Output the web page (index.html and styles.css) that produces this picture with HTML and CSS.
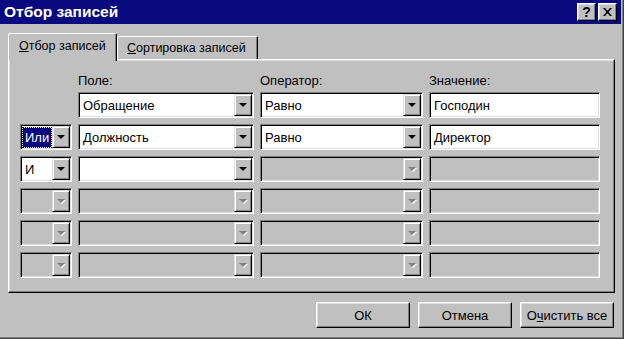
FILE: index.html
```html
<!DOCTYPE html>
<html lang="ru">
<head>
<meta charset="utf-8">
<title>Отбор записей</title>
<link rel="stylesheet" href="styles.css">
</head>
<body>
<div class="window">
  <div class="titlebar">
    <span class="title">Отбор записей</span>
    <div class="tb-buttons">
      <span class="tb-btn help">?</span>
      <span class="tb-btn close"><svg width="9" height="8" viewBox="0 0 9 8"><path d="M0 0h2l2.5 2.8L7 0h2L5.5 4L9 8H7L4.5 5.2L2 8H0l3.5-4z" fill="#000"/></svg></span>
    </div>
  </div>
  <div class="body">
    <div class="tabs">
      <div class="tab active"><span class="tab-label"><u>О</u>тбор записей</span></div>
      <div class="tab"><span class="tab-label"><u>С</u>ортировка записей</span></div>
    </div>
    <div class="panel">
      <div class="grid">
        <div></div>
        <div class="label">Поле:</div>
        <div class="label">Оператор:</div>
        <div class="label">Значение:</div>

        <div></div>
        <div class="combo"><span class="txt">Обращение</span><span class="dd"><i class="arrow"></i></span></div>
        <div class="combo"><span class="txt">Равно</span><span class="dd"><i class="arrow"></i></span></div>
        <div class="edit"><span class="txt">Господин</span></div>

        <div class="combo"><span class="txt"><span class="sel">Или</span></span><span class="dd"><i class="arrow"></i></span></div>
        <div class="combo"><span class="txt">Должность</span><span class="dd"><i class="arrow"></i></span></div>
        <div class="combo"><span class="txt">Равно</span><span class="dd"><i class="arrow"></i></span></div>
        <div class="edit"><span class="txt">Директор</span></div>

        <div class="combo"><span class="txt">И</span><span class="dd"><i class="arrow"></i></span></div>
        <div class="combo"><span class="txt"></span><span class="dd"><i class="arrow"></i></span></div>
        <div class="combo disabled"><span class="txt"></span><span class="dd"><i class="arrow"></i></span></div>
        <div class="edit disabled"><span class="txt"></span></div>

        <div class="combo disabled"><span class="txt"></span><span class="dd"><i class="arrow"></i></span></div>
        <div class="combo disabled"><span class="txt"></span><span class="dd"><i class="arrow"></i></span></div>
        <div class="combo disabled"><span class="txt"></span><span class="dd"><i class="arrow"></i></span></div>
        <div class="edit disabled"><span class="txt"></span></div>

        <div class="combo disabled"><span class="txt"></span><span class="dd"><i class="arrow"></i></span></div>
        <div class="combo disabled"><span class="txt"></span><span class="dd"><i class="arrow"></i></span></div>
        <div class="combo disabled"><span class="txt"></span><span class="dd"><i class="arrow"></i></span></div>
        <div class="edit disabled"><span class="txt"></span></div>

        <div class="combo disabled"><span class="txt"></span><span class="dd"><i class="arrow"></i></span></div>
        <div class="combo disabled"><span class="txt"></span><span class="dd"><i class="arrow"></i></span></div>
        <div class="combo disabled"><span class="txt"></span><span class="dd"><i class="arrow"></i></span></div>
        <div class="edit disabled"><span class="txt"></span></div>
      </div>
    </div>
    <div class="buttons">
      <span class="btn">ОК</span>
      <span class="btn">Отмена</span>
      <span class="btn"><span>О<u>ч</u>истить все</span></span>
    </div>
  </div>
</div>
</body>
</html>
```
FILE: styles.css
```css
* { box-sizing: border-box; }
html, body { margin: 0; padding: 0; }
body {
  background: #c0c0c0;
  font-family: "Liberation Sans", Arial, sans-serif;
  font-size: 13px;
  color: #000;
  width: 624px;
  height: 339px;
  overflow: hidden;
}
.window {
  width: 624px;
  height: 339px;
  background: #c0c0c0;
  border-right: 1px solid #404040;
  border-bottom: 1px solid #404040;
  padding: 0 2px 2px 0;
  box-shadow: inset -1px -1px #808080;
}
.titlebar {
  height: 24px;
  background: #0a0a80;
  display: flex;
  align-items: center;
  justify-content: space-between;
  padding: 0 4px 0 4px;
}
.title {
  color: #fff;
  font-weight: bold;
  font-size: 15.5px;
}
.tb-buttons { display: flex; gap: 2px; }
.tb-btn {
  width: 19px;
  height: 18px;
  background: #c0c0c0;
  border: 1px solid;
  border-color: #fff #000 #000 #fff;
  box-shadow: inset -1px -1px #808080, inset 1px 1px #dfdfdf;
  display: flex;
  align-items: center;
  justify-content: center;
  font-weight: bold;
  font-size: 14px;
  line-height: 1;
}
.body {
  padding: 9px 6px 0 8px;
}
.tabs {
  display: flex;
  align-items: flex-start;
  height: 26px;
  position: relative;
  z-index: 1;
}
.tab {
  height: 23px;
  margin-top: 3px;
  width: 141px;
  padding: 0 0 0 9px;
  display: flex;
  align-items: center;
  font-size: 12.5px;
  border: 1px solid;
  border-bottom: none;
  border-color: #fff #000 transparent #fff;
  box-shadow: inset -1px 0 #808080;
  border-radius: 2px 2px 0 0;
  background: #c0c0c0;
}
.tab-label { white-space: nowrap; }
.tab.active {
  height: 28px;
  margin-top: 0;
  width: 109px;
  padding: 0 0 4px 10px;
}
.panel {
  height: 234px;
  border: 1px solid;
  border-color: #fff #000 #000 #fff;
  box-shadow: inset -1px -1px #808080, inset 1px 1px #dfdfdf;
  padding: 12px 0 0 11px;
}
.grid {
  display: grid;
  grid-template-columns: 52px 176px 163px 171px;
  grid-template-rows: 14px repeat(6, 26px);
  column-gap: 6px;
  row-gap: 6px;
}
.label {
  line-height: 14px;
  position: relative;
  top: 2px;
}
.combo, .edit {
  display: flex;
  height: 26px;
  border: 1px solid;
  border-color: #808080 #fff #fff #808080;
  box-shadow: inset 1px 1px #000, inset -1px -1px #dfdfdf;
  background: #fff;
  padding: 1px;
}
.combo.disabled, .edit.disabled { background: #c0c0c0; }
.txt {
  flex: 1;
  display: flex;
  align-items: center;
  padding-left: 3px;
  white-space: nowrap;
  overflow: hidden;
}
.sel {
  background: #0a0a80;
  color: #fff;
  outline: 1px dotted #000;
  margin-left: -2px;
  padding: 2px;
  line-height: 15px;
}
.dd {
  width: 18px;
  height: 22px;
  background: #c0c0c0;
  border: 1px solid;
  border-color: #dfdfdf #000 #000 #dfdfdf;
  box-shadow: inset 1px 1px #fff, inset -1px -1px #808080;
  display: flex;
  align-items: center;
  justify-content: center;
}
.arrow {
  width: 0;
  height: 0;
  border-left: 4px solid transparent;
  border-right: 4px solid transparent;
  border-top: 4px solid #000;
}
.disabled .arrow {
  border-top-color: #808080;
  filter: drop-shadow(1px 1px 0 #fff);
}
.buttons {
  display: flex;
  justify-content: flex-end;
  gap: 8px;
  margin-top: 9px;
  padding-right: 1px;
}
.btn {
  width: 94px;
  height: 26px;
  border: 1px solid;
  border-color: #fff #000 #000 #fff;
  box-shadow: inset -1px -1px #808080, inset 1px 1px #dfdfdf;
  display: flex;
  align-items: center;
  justify-content: center;
  background: #c0c0c0;
  white-space: nowrap;
}
```
